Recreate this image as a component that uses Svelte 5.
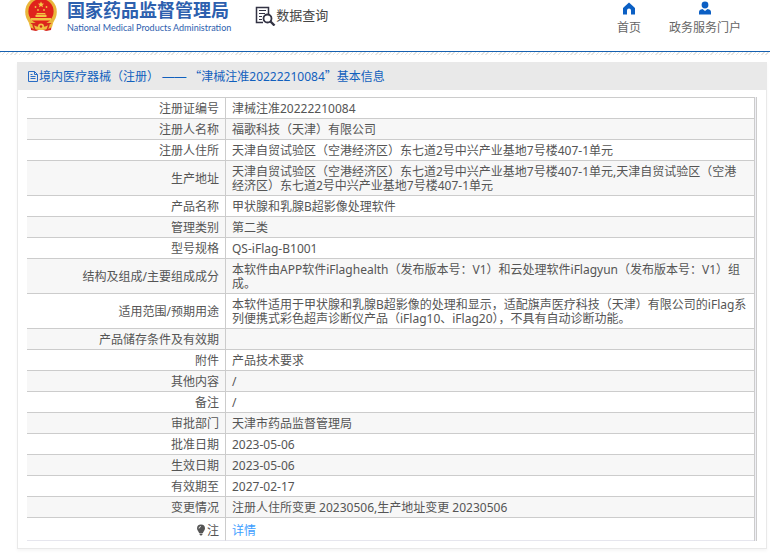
<script>
  const rows = [
    ['注册证编号', '津械注准20222210084'],
    ['注册人名称', '福歌科技（天津）有限公司'],
    ['注册人住所', '天津自贸试验区（空港经济区）东七道2号中兴产业基地7号楼407-1单元'],
    ['生产地址', '天津自贸试验区（空港经济区）东七道2号中兴产业基地7号楼407-1单元,天津自贸试验区（空港经济区）东七道2号中兴产业基地7号楼407-1单元'],
    ['产品名称', '甲状腺和乳腺B超影像处理软件'],
    ['管理类别', '第二类'],
    ['型号规格', 'QS-iFlag-B1001'],
    ['结构及组成/主要组成成分', '本软件由APP软件iFlaghealth（发布版本号：V1）和云处理软件iFlagyun（发布版本号：V1）组成。'],
    ['适用范围/预期用途', '本软件适用于甲状腺和乳腺B超影像的处理和显示，适配旗声医疗科技（天津）有限公司的iFlag系列便携式彩色超声诊断仪产品（iFlag10、iFlag20），不具有自动诊断功能。'],
    ['产品储存条件及有效期', ''],
    ['附件', '产品技术要求'],
    ['其他内容', '/'],
    ['备注', '/'],
    ['审批部门', '天津市药品监督管理局'],
    ['批准日期', '2023-05-06'],
    ['生效日期', '2023-05-06'],
    ['有效期至', '2027-02-17'],
    ['变更情况', '注册人住所变更 20230506,生产地址变更 20230506']
  ];
</script>

<div class="page">
  <header>
    <a class="brand" href="#home">
      <svg class="emblem" viewBox="0 0 32 31" aria-hidden="true">
        <circle cx="16" cy="12" r="15.8" fill="#e9b63c" />
        <path d="M5 23l22 0 -1 7-5 1-5-2-5 2-5-1z" fill="#d8281f" />
        <path d="M3 20q4 7 13 7t13-7l-2 7q-4 3-11 3T5 27z" fill="#efbd3e" />
        <circle cx="16" cy="11.500" r="12.600" fill="#e0231c" />
        <path d="M16 1.500l.9 2 2.200.2-1.700 1.400.5 2.100-1.900-1.100-1.900 1.100.5-2.100-1.700-1.400 2.200-.2z" fill="#f6cf48" />
        <g fill="#f3c343">
          <circle cx="10.500" cy="7" r=".9" /><circle cx="21.500" cy="7" r=".9" />
          <circle cx="13" cy="10" r=".9" /><circle cx="19" cy="10" r=".9" />
          <path d="M12 13h8l1 1.500H11zM10.500 15h11v2h-11zM6 18h20v2.500H6z" />
        </g>
        <circle cx="16" cy="26.500" r="3" fill="#f3c343" />
        <circle cx="16" cy="26.500" r="1.300" fill="#d8281f" />
        <path d="M8 25l2 5M24 25l-2 5" stroke="#d8281f" stroke-width="1.500" />
      </svg>
      <span class="names">
        <strong>国家药品监督管理局</strong>
        <span class="english">National Medical Products Administration</span>
      </span>
    </a>
    <div class="query">
      <svg width="21" height="20" viewBox="0 0 21 20" fill="none" stroke="#333344" aria-hidden="true">
        <path d="M8 16.500H1.500V1.500h12V8" stroke-width="1.500" />
        <path d="M4 4.500h7M4 7.500h6M4 10.500h3M4 13.500h3" stroke-width="1.200" />
        <circle cx="12.500" cy="12.500" r="4" stroke-width="1.800" />
        <path d="M15.500 15.500l4 4" stroke-width="2.400" />
      </svg>
      <span>数据查询</span>
    </div>
    <nav>
      <a href="#index">
        <svg width="14" height="14" viewBox="0 0 14 14" aria-hidden="true">
          <path d="M7 1.500L13 7v6.500H9V9.500a2 2 0 0 0-4 0v4H1V7z" fill="#0b5fc4" />
        </svg>
        首页
      </a>
      <a href="#services">
        <svg width="14" height="14" viewBox="0 0 14 14" aria-hidden="true">
          <circle cx="7" cy="4" r="3.400" fill="#0b5fc4" />
          <path d="M1 13.500V11q0-2.500 3.500-3L7 10l2.500-2q3.500.5 3.500 3v2.500z" fill="#0b5fc4" />
        </svg>
        政务服务门户
      </a>
    </nav>
  </header>
  <div class="hatch"></div>

  <main>
    <h1>
      <svg width="10" height="12" viewBox="0 0 10 12" fill="none" stroke="#2a6cc4" aria-hidden="true">
        <path d="M.5 1.500h6l3 3v7h-9zM6.500 1.500v3h3M2.500 4.500h2M2.500 6.500h5M2.500 8.500h5" />
      </svg>
      <span>境内医疗器械（注册） <span class="dash">——</span> <span class="wide">“</span>津械注准20222210084<span class="wide">”</span>基本信息</span>
    </h1>
    <div class="frame">
      <table>
        <tbody>
          {#each rows as [label, value]}
            <tr>
              <th scope="row">{label}</th>
              <td>{value}</td>
            </tr>
          {/each}
          <tr class="note">
            <th scope="row">
              <svg width="10" height="12" viewBox="0 0 10 12" aria-hidden="true">
                <path d="M5 .5a4 4 0 0 1 4 4c0 2-2 3-2 4.500H3C3 7.500 1 6.500 1 4.500a4 4 0 0 1 4-4zM3.500 9.500h3v1l-1 1h-1l-1-1z" fill="#555" />
                <path d="M3 4.500a2 2 0 0 1 2-2" stroke="#fff" fill="none" stroke-width=".8" />
              </svg>注</th>
            <td><a href="#detail">详情</a></td>
          </tr>
        </tbody>
      </table>
    </div>
  </main>
</div>

<style>
  :global(body) {
    margin: 0;
    background: #fff;
  }

  .page {
    font-family: "Noto Sans", "Noto Sans CJK SC", sans-serif;
    font-size: 12px;
    line-height: 14px;
    color: #555;
  }

  a {
    text-decoration: none;
  }

  header {
    display: flex;
    align-items: flex-start;
    height: 51px;
    padding: 0 29px 0 25px;
    border-bottom: 1px solid #1660b0;
  }

  .brand {
    display: flex;
    gap: 10px;
    color: #2d60ae;
  }

  .emblem {
    width: 32px;
    height: 31px;
  }

  .names {
    display: flex;
    flex-direction: column;
    padding-top: 1px;
  }

  .names strong {
    font-family: "Liberation Sans", "Noto Sans CJK SC", sans-serif;
    font-size: 18px;
    line-height: 20px;
  }

  .english {
    font-family: Lato, sans-serif;
    font-size: 9px;
    font-weight: 400;
    line-height: 14px;
  }

  .query {
    display: flex;
    margin-left: 24px;
    padding-top: 6px;
    font-size: 13px;
    line-height: 18px;
    color: #444;
  }

  .query svg {
    flex: none;
  }

  nav {
    display: flex;
    gap: 28px;
    margin-left: auto;
  }

  nav a {
    display: flex;
    flex-direction: column;
    align-items: center;
    gap: 6px;
    padding-top: 1px;
    color: #666;
  }

  .hatch {
    height: 3px;
    background: repeating-linear-gradient(135deg, #e4e4e0 0 1px, #fff 1px 3px);
  }

  main {
    margin: 7px 3px 8px 17px;
    border: 1px solid #e9e9e9;
    border-top: 0;
    box-shadow: 0 2px 3px #f6f6f6;
  }

  h1 {
    display: flex;
    align-items: center;
    gap: 1px;
    height: 28px;
    margin: 0;
    padding: 0 10px;
    background: #e9e9e9;
    color: #1160bd;
    font-size: 12px;
    font-weight: 400;
  }

  .wide {
    font-family: "Noto Sans CJK SC", sans-serif;
  }

  .dash {
    font-family: "Liberation Sans", sans-serif;
  }

  .frame {
    margin: 7px 9px;
    padding-right: 1px;
    border-right: 1px solid #ccc;
    background: #efeff5;
  }

  table {
    width: 100%;
    border-spacing: 0;
    border-top: 1px solid #ccc;
    border-right: 1px solid #ccc;
    background: #fff;
  }

  tr:nth-child(even) {
    background: #f7f7f7;
  }

  th,
  td {
    height: 14px;
    padding: 4px 6px 2px;
    border-bottom: 1px solid #ccc;
  }

  th {
    width: 186px;
    border-right: 1px solid #ccc;
    font-weight: 400;
    text-align: right;
  }

  th svg {
    vertical-align: -1px;
    margin-right: 1px;
  }

  td {
    word-break: break-all;
  }

  .note {
    background: #fff;
  }

  .note th,
  .note td {
    padding: 6px 6px 2px;
    border-bottom-color: #e6e6ee;
  }

  td a {
    color: #409eff;
  }
</style>
